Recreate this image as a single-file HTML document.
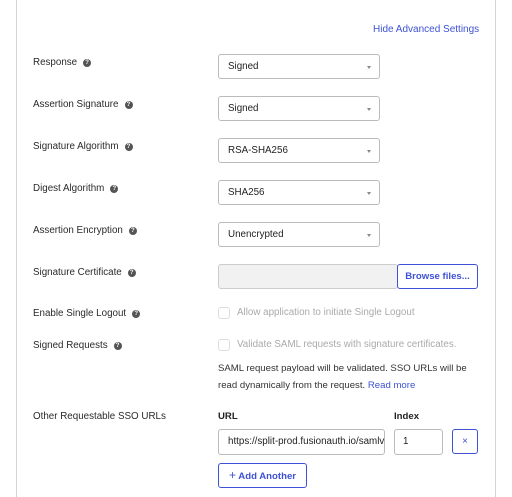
<!DOCTYPE html>
<html style="height:497px;overflow:hidden"><head><style>
body{margin:0;width:512px;height:497px;background:#fff;font-family:"Liberation Sans",sans-serif;color:#222;position:relative;overflow:hidden}
.card{position:absolute;left:16px;top:-5px;width:478px;height:520px;border:1px solid #d4d4d4;border-top:none;border-bottom:none}
.a{position:absolute;white-space:nowrap}
.lbl{font-size:9.8px;color:#2a2a2a}
.q{display:inline-block;width:8px;height:8px;border-radius:50%;background:#555;color:#fff;font-size:6px;text-align:center;line-height:8px;font-weight:bold;vertical-align:1px;margin-left:6px}
.sel{position:absolute;left:218px;height:25px;border:1px solid #bbb;border-radius:3px;font-size:9.8px;line-height:24px;padding-left:9px;box-sizing:border-box;width:162px}
.sel:after{content:"";position:absolute;right:8px;top:11px;border:2px solid transparent;border-top:3px solid #888}
.blue{color:#3d52d5}
.cb{position:absolute;left:218px;width:10px;height:10px;border:1px solid #ddd;border-radius:3px}
.dis{font-size:9.8px;color:#aaa}
</style></head><body>
<div class="card"></div>
<div class="a blue" style="left:373px;top:24px;font-size:10px">Hide Advanced Settings</div>

<div class="a lbl" style="left:33px;top:57px">Response<span class="q">?</span></div>
<div class="sel" style="top:54px">Signed</div>
<div class="a lbl" style="left:33px;top:99px">Assertion Signature<span class="q">?</span></div>
<div class="sel" style="top:96px">Signed</div>
<div class="a lbl" style="left:33px;top:141px">Signature Algorithm<span class="q">?</span></div>
<div class="sel" style="top:138px">RSA-SHA256</div>
<div class="a lbl" style="left:33px;top:183px">Digest Algorithm<span class="q">?</span></div>
<div class="sel" style="top:180px">SHA256</div>
<div class="a lbl" style="left:33px;top:225px">Assertion Encryption<span class="q">?</span></div>
<div class="sel" style="top:222px">Unencrypted</div>

<div class="a lbl" style="left:33px;top:267px">Signature Certificate<span class="q">?</span></div>
<div class="a" style="left:218px;top:264px;width:180px;height:25px;background:#f1f1f1;border:1px solid #ccc;border-radius:3px;box-sizing:border-box"></div>
<div class="a blue" style="left:397px;top:264px;width:81px;height:25px;border:1px solid #3d52d5;border-radius:3px;box-sizing:border-box;font-size:9.6px;font-weight:bold;text-align:center;line-height:23px;background:#fff">Browse files...</div>

<div class="a lbl" style="left:33px;top:308px">Enable Single Logout<span class="q">?</span></div>
<div class="cb" style="top:307px"></div>
<div class="a dis" style="left:237px;top:307px">Allow application to initiate Single Logout</div>

<div class="a lbl" style="left:33px;top:340px">Signed Requests<span class="q">?</span></div>
<div class="cb" style="top:339px"></div>
<div class="a dis" style="left:237px;top:339px">Validate SAML requests with signature certificates.</div>
<div class="a" style="left:218px;top:361px;font-size:9.6px;line-height:16.5px;color:#333">SAML request payload will be validated. SSO URLs will be<br>read dynamically from the request. <span class="blue">Read more</span></div>

<div class="a lbl" style="left:33px;top:411px">Other Requestable SSO URLs</div>
<div class="a" style="left:218px;top:411px;font-size:9.6px;font-weight:bold">URL</div>
<div class="a" style="left:394px;top:411px;font-size:9.6px;font-weight:bold">Index</div>
<div class="a" style="left:218px;top:429px;width:167px;height:26px;border:1px solid #bbb;border-radius:3px;box-sizing:border-box;font-size:9.8px;line-height:24px;padding-left:9px;overflow:hidden">https://split-prod.fusionauth.io/samlv2</div>
<div class="a" style="left:394px;top:429px;width:49px;height:26px;border:1px solid #bbb;border-radius:3px;box-sizing:border-box;font-size:9.8px;line-height:24px;padding-left:8px">1</div>
<div class="a blue" style="left:452px;top:429px;width:26px;height:25px;border:1px solid #3d52d5;border-radius:3px;box-sizing:border-box;text-align:center;line-height:24px;font-size:10px">×</div>
<div class="a blue" style="left:218px;top:463px;width:89px;height:25px;border:1px solid #3d52d5;border-radius:3px;box-sizing:border-box;text-align:center;line-height:23px;font-size:9.6px;font-weight:bold"><span style="font-weight:normal;font-size:12px">+</span> Add Another</div>
</body></html>
